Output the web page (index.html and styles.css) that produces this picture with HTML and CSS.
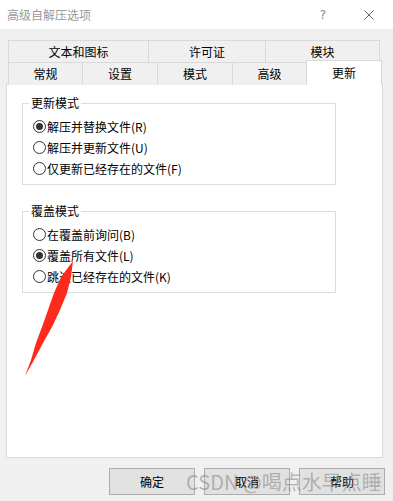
FILE: index.html
```html
<!DOCTYPE html>
<html lang="zh-CN">
<head>
    <meta charset="UTF-8">
    <meta name="viewport" content="width=device-width, initial-scale=1.0">
    <title>高级自解压选项</title>
    <link rel="stylesheet" href="styles.css">
</head>
<body>
    <div class="titlebar">
        <span class="title">高级自解压选项</span>
        <span class="help">?</span>
        <svg class="close" width="10" height="10" viewBox="0 0 10 10">
            <path d="M0.5 0.5 L9.5 9.5 M9.5 0.5 L0.5 9.5" stroke="#666" stroke-width="1" fill="none"/>
        </svg>
    </div>

    <div class="client">
        <div class="tabs">
            <div class="tab-row row-back">
                <div class="tab">文本和图标</div>
                <div class="tab">许可证</div>
                <div class="tab">模块</div>
            </div>
            <div class="tab-row row-front">
                <div class="tab">常规</div>
                <div class="tab">设置</div>
                <div class="tab">模式</div>
                <div class="tab">高级</div>
                <div class="tab active">更新</div>
            </div>
        </div>

        <div class="panel">
            <fieldset class="group">
                <legend>更新模式</legend>
                <div class="option"><span class="radio checked"></span>解压并替换文件(R)</div>
                <div class="option"><span class="radio"></span>解压并更新文件(U)</div>
                <div class="option"><span class="radio"></span>仅更新已经存在的文件(F)</div>
            </fieldset>

            <fieldset class="group second">
                <legend>覆盖模式</legend>
                <div class="option"><span class="radio"></span>在覆盖前询问(B)</div>
                <div class="option"><span class="radio checked"></span>覆盖所有文件(L)</div>
                <div class="option"><span class="radio"></span>跳过已经存在的文件(K)</div>
            </fieldset>
        </div>

        <div class="buttons">
            <button class="btn">确定</button>
            <button class="btn">取消</button>
            <button class="btn">帮助</button>
        </div>
    </div>

    <!-- annotation on top of the screenshot -->
    <svg class="arrow" width="393" height="501" viewBox="0 0 393 501">
        <polygon fill="#fe2a1c" points="73,261 71,277 67,293 60,310 52,327 43,343 34,360 25,376 31,360 36,343 42,327 48,310 54,293 61,277"/>
    </svg>
    <div class="watermark">CSDN @喝点水早点睡</div>
</body>
</html>
```

FILE: styles.css
```css
* {
    box-sizing: border-box;
}
body {
    margin: 0;
    width: 393px;
    height: 501px;
    overflow: hidden;
    position: relative;
    background-color: #f0f0f0;
    font-family: "Microsoft YaHei", "Noto Sans CJK SC", sans-serif;
    font-size: 12px;
    line-height: 16px;
    color: #000;
}
.titlebar {
    height: 29px;
    background-color: #fff;
    display: flex;
    align-items: center;
    padding: 0 19px 0 7px;
    color: #999;
}
.titlebar .title {
    flex: 1;
}
.titlebar .help {
    width: 12px;
    margin-right: 35px;
    text-align: center;
    color: #888;
    font-family: "DejaVu Sans", sans-serif;
    font-size: 12px;
}
.client {
    padding: 11px 0 0 6px;
}
.tabs {
    margin-left: 2px;
    width: 375px;
}
.tab-row {
    display: grid;
    height: 22px;
}
.row-back {
    grid-template-columns: 140px 117px 115px;
}
.row-front {
    grid-template-columns: 74px 75px 75px 74px 76px;
}
.tab {
    border: 1px solid #d9d9d9;
    border-right: none;
    border-bottom: none;
    display: flex;
    align-items: center;
    justify-content: center;
    background-color: #f0f0f0;
}
.tab:last-child {
    border-right: 1px solid #d9d9d9;
}
.tab.active {
    background-color: #fff;
    align-self: start;
    margin-top: -2px;
    height: 25px;
    position: relative;
    z-index: 1;
}
.panel {
    width: 377px;
    height: 374px;
    background-color: #fff;
    border: 1px solid #d9d9d9;
    padding: 0 0 0 15px;
}
.group {
    width: 314px;
    margin: 10px 0 0 0;
    border: 1px solid #dcdcdc;
    padding: 5px 0 5px 10px;
}
.group.second {
    margin-top: 18px;
}
.group legend {
    padding: 0 2px;
    margin-left: -4px;
    line-height: 16px;
}
.option {
    display: flex;
    align-items: center;
    gap: 1px;
    height: 21px;
}
.radio {
    width: 13px;
    height: 13px;
    border: 1px solid #333;
    border-radius: 50%;
    background-color: #fff;
    display: flex;
    align-items: center;
    justify-content: center;
}
.radio.checked::after {
    content: "";
    width: 7px;
    height: 7px;
    border-radius: 50%;
    background-color: #333;
}
.buttons {
    display: flex;
    justify-content: flex-end;
    gap: 9px;
    margin-top: 10px;
    padding-right: 8px;
}
.btn {
    width: 86px;
    height: 27px;
    background-color: #e1e1e1;
    border: 1px solid #adadad;
    font-family: inherit;
    font-size: 12px;
    color: #000;
    padding: 0;
}
.arrow {
    position: absolute;
    left: 0;
    top: 0;
    pointer-events: none;
}
.watermark {
    position: absolute;
    left: 186px;
    top: 469px;
    font-family: "Noto Sans CJK SC", sans-serif;
    font-size: 20px;
    line-height: 26px;
    color: rgba(130, 130, 130, 0.55);
    white-space: nowrap;
    pointer-events: none;
}
```
